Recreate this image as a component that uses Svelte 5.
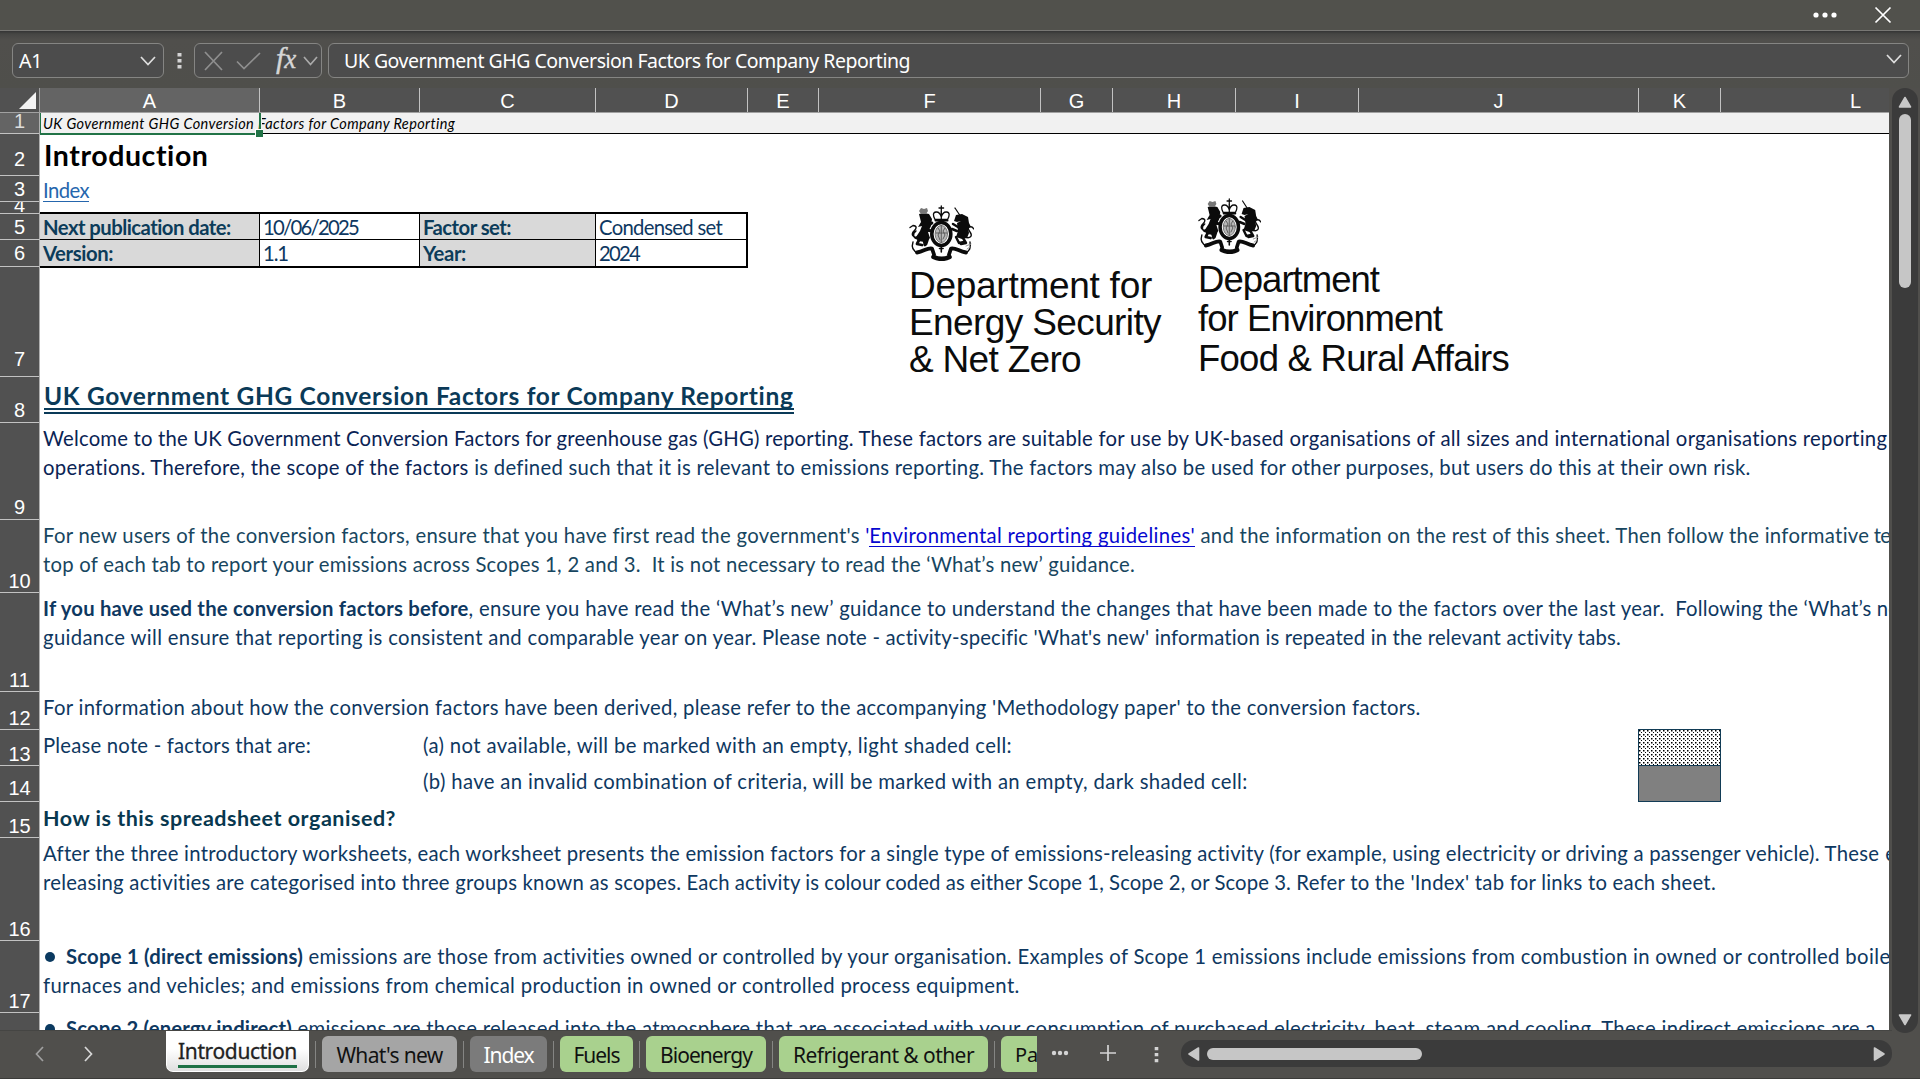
<script lang="ts">
  type Seg = { t: string; w?: number; c?: string };

  // Tracks a run of text so that it fills the given width.
  function fit(node: HTMLElement, width?: number) {
    if (!width) return;
    const n = [...(node.textContent ?? '')].length;
    const natural = node.getBoundingClientRect().width;
    node.style.letterSpacing = `${(width - natural) / n}px`;
  }

  const cols = [
    ['A', 220], ['B', 160], ['C', 176], ['D', 152], ['E', 71], ['F', 222],
    ['G', 72], ['H', 123], ['I', 123], ['J', 280], ['K', 82], ['L', 270],
  ] as [string, number][];

  // row number, height, space under the label
  const heads = [
    [1, 21, 0], [2, 42, 4], [3, 26, 0], [4, 12, -3], [5, 26, 0], [6, 27, 1], [7, 110, 5],
    [8, 46, 0], [9, 97, 0], [10, 73, -1], [11, 99, -1], [12, 38, -1], [13, 36, -1],
    [14, 36, 1], [15, 36, -1], [16, 103, -1], [17, 72, -1], [18, 40, 0],
  ] as [number, number, number][];

  const r9: Seg[][] = [
    [{ t: 'Welcome to the UK Government Conversion Factors for greenhouse gas (GHG) reporting.', w: 811, c: 'deep' }, { t: ' These factors are suitable for use by UK-based organisations of all sizes and international organisations reporting', w: 1035, c: 'deep' }],
    [{ t: 'operations. Therefore, the scope of the factors', w: 426, c: 'deep' }, { t: ' is defined such that it is relevant to emissions reporting. The factors may also be used for other purposes, but users do this at their own risk.', w: 1282 }],
  ];
  const r10: Seg[][] = [
    [
      { t: "For new users of the conversion factors, ensure that you have first read the government's ", w: 822 },
      { t: "'", w: 4, c: 'blue' },
      { t: "Environmental reporting guidelines'", w: 326, c: 'blue link' },
      { t: ' and the information on the rest of this sheet. Then follow the informative', w: 675 },
      { t: ' text at the', w: 88 },
    ],
    [{ t: 'top of each tab to report your emissions across Scopes 1, 2 and 3.  It is not necessary to read the ‘What’s new’ guidance.', w: 1092 }],
  ];
  const r11: Seg[][] = [
    [
      { t: 'If you have used the conversion factors before', w: 425.5, c: 'bold' },
      { t: ', ensure you have read the ‘What’s new’ guidance', w: 453 },
      { t: ' to understand the changes that have been made to the factors over the last year.', w: 743 },
      { t: '  Following the ‘What’s', w: 207 },
      { t: ' new’', w: 48 },
    ],
    [
      { t: 'guidance will ensure that reporting is consistent and comparable year on year.', w: 714 },
      { t: " Please note - activity-specific 'What's new' information is repeated in the relevant activity tabs.", w: 865 },
    ],
  ];
  const r12: Seg[][] = [
    [{ t: 'For information about how the conversion factors have been derived,', w: 635 }, { t: " please refer to the accompanying 'Methodology paper' to the conversion factors.", w: 743 }],
  ];
  const r16: Seg[][] = [
    [
      { t: 'After the three introductory worksheets, each worksheet presents the emission factors for a single type of emissions-releasing activity (for example, using electricity or driving a passenger vehicle). These', w: 1836 },
      { t: ' emissions-', w: 110 },
    ],
    [
      { t: 'releasing activities are categorised into three groups known as scopes.', w: 639 },
      { t: ' Each activity is colour coded as either Scope 1, Scope 2, or Scope 3.', w: 610 },
      { t: " Refer to the 'Index' tab for links to each sheet.", w: 425 },
    ],
  ];
  const r17: Seg[][] = [
    [
      { t: 'Scope 1 (direct emissions)', w: 237, c: 'bold' },
      { t: ' emissions are those from activities owned or controlled by your organisation.', w: 710 },
      { t: ' Examples of Scope 1 emissions include emissions from combustion in owned or controlled', w: 828 },
      { t: ' boilers,', w: 73 },
    ],
    [{ t: 'furnaces and vehicles; and emissions from chemical production in owned or controlled process equipment.', w: 977 }],
  ];
  const r18: Seg[][] = [
    [
      { t: 'Scope 2 (energy indirect)', w: 226, c: 'bold' },
      { t: ' emissions are those released into the atmosphere that are associated with your consumption of purchased electricity, heat, steam and cooling. These indirect emissions are a', w: 1584 },
    ],
  ];

  const tabs = [
    { t: "What's new", w: 135, tw: 106, k: 'grey' },
    { t: 'Index', w: 77, tw: 50, k: 'dark' },
    { t: 'Fuels', w: 73, tw: 46, k: 'green' },
    { t: 'Bioenergy', w: 120, tw: 92, k: 'green' },
    { t: 'Refrigerant & other', w: 209, tw: 181, k: 'green' },
  ];
</script>

{#snippet lines(ls: Seg[][], bullet = false)}
  {#each ls as l, i}
    <p class="line">
      {#if bullet && i === 0}<i class="bullet"></i>{/if}{#each l as s}<span class="seg {s.c ?? ''}" use:fit={s.w}>{s.t}</span>{/each}
    </p>
  {/each}
{/snippet}

{#snippet crest()}
  <svg class="crest" viewBox="5 5 66 56" preserveAspectRatio="none">
    <g fill="none" stroke="#0b0b0b" stroke-linecap="round" stroke-linejoin="round">
      <path d="M38.300 6v6M36 8h4.600" stroke-width="1.300" />
      <path d="M32 19.500c-2-4-2.500-7 1-7.500 3-.3 4.500 2 5.300 5 .8-3 2.300-5.300 5.300-5 3.500.5 3 3.500 1 7.500zM38.300 12v7" stroke-width="1.300" />
      <path d="M32.500 20.500h12" stroke-width="2" />
      <ellipse cx="38.300" cy="34" rx="9.500" ry="11.500" stroke-width="3.600" />
      <ellipse cx="38.300" cy="34" rx="6.200" ry="8.500" fill="#b8b8b8" stroke="#777" stroke-width="1" />
      <path d="M38.300 25.500v17M33 33h11M35 28l2 3-2 4 2 5M42 28l-2 3 2 4-2 4" stroke="#555" stroke-width=".9" />
      <path d="M15 37c-6 1-7-3-4-6s3-5-1-5.500M10 25.500l-3 2M13 31c-4 3-3 7 2 8" stroke-width="1.400" />
      <path d="M62 37c5 2 8-1 5-5s-2-6 2-5M69 27l2 2" stroke-width="1.400" />
      <path d="M52 8l6 9" stroke-width="1.200" />
      <path d="M17 38l-3 6 5 1M25 38l-2 6M24 26l5-3M23 30l6 1M20 36l2 9" stroke-width="2.800" />
      <path d="M60 38l3 5-5 1M53 37l3 6 5-1M55 27l-5-3M54 31l-5-2" stroke-width="2.500" />
      <path d="M10 42c-2 6 0 9 5 11 3-1 6-4 9-4M67 42c1 6 0 9-5 11-3-1-6-4-9-4" stroke-width="1.400" />
      <path d="M14 52.500c7-1 10-5 15-4l2 6M63 52.500c-7-1-10-5-15-4l-2 6" stroke-width="3.800" />
      <path d="M30.500 57c5 2.200 11.500 2.200 16 0" stroke-width="4.600" />
      <path d="M38.300 46v6M36.500 48.500h3.600" stroke-width="1.600" />
      <path d="M63 46l5-2M64 49l3-2" stroke="#999" stroke-width="1" />
    </g>
    <g fill="#0b0b0b">
      <path d="M16 14l5-1 5 1 3 5-1 7-3 6 2 6-5 4-7-1-2-4 4-6 2-5-4 1 3-5z" />
      <path d="M53 15l6-1 6 3 1 6 2 4-3 1 1 5-2 5-5 1-6-2 2-6-1-8 4-2-4 1-3-1z" />
      <path d="M16 11l2-3 3 1 3-1 1 3-2 3h-5z" fill="#777" />
    </g>
  </svg>
{/snippet}

<div class="app">
  <header class="title">
    <svg width="28" height="8" viewBox="0 0 28 8"><circle cx="5" cy="4" r="2.600" /><circle cx="14" cy="4" r="2.600" /><circle cx="23" cy="4" r="2.600" /></svg>
    <svg class="close" width="18" height="18" viewBox="0 0 18 18"><path d="M1.500 1.500l15 15M16.500 1.500l-15 15" /></svg>
  </header>

  <div class="formula">
    <div class="box name">
      <span use:fit={23}>A1</span>
      <svg width="16" height="10" viewBox="0 0 16 10"><path d="M1 1l7 7.500L15 1" /></svg>
    </div>
    <svg class="grip" width="5" height="18" viewBox="0 0 5 18"><path d="M.5 1h4v3.500h-4zM.5 7h4v3.500h-4zM.5 13h4v3.500h-4z" /></svg>
    <div class="box fx">
      <svg class="dim" width="19" height="20" viewBox="0 0 19 20"><path d="M1 1l17 18M18 1L1 19" /></svg>
      <svg class="dim tick" width="25" height="18" viewBox="0 0 25 18"><path d="M1 9.500l7 7L24 1" /></svg>
      <span class="fn">f<small>x</small></span>
      <svg class="soft" width="15" height="10" viewBox="0 0 15 10"><path d="M1 1l6.500 7.500L14 1" /></svg>
    </div>
    <div class="box bar">
      <span use:fit={566}>UK Government GHG Conversion Factors for Company Reporting</span>
      <svg width="16" height="10" viewBox="0 0 16 10"><path d="M1 1l7 7.500L15 1" /></svg>
    </div>
  </div>

  <div class="work">
    <div class="pane">
      <div class="colheads">
        <div class="corner"><svg width="17" height="17" viewBox="0 0 17 17"><path d="M17 0v17H0z" /></svg></div>
        {#each cols as [c, w]}
          <div class="ch" class:sel={c === 'A'} style:width="{w}px">{c}</div>
        {/each}
      </div>
      <div class="body">
        <div class="rowheads">
          {#each heads as [n, h, p]}
            <div class="rh" class:sel={n === 1} class:tiny={n === 4} style:height="{h}px"><span style:margin-bottom="{p}px">{n}</span></div>
          {/each}
        </div>
        <div class="sheet">
          <div class="r r1"><span use:fit={412}>UK Government GHG Conversion Factors for Company Reporting</span><i class="cursor"></i></div>
          <div class="r r2"><span class="seg" use:fit={165}>Introduction</span></div>
          <div class="r r3"><span class="seg" use:fit={46}>Index</span></div>
          <div class="info">
            <div class="k"><span use:fit={188}>Next publication date:</span></div>
            <div><span use:fit={95}>10/06/2025</span></div>
            <div class="k"><span use:fit={88}>Factor set:</span></div>
            <div><span use:fit={123}>Condensed set</span></div>
            <div class="k"><span use:fit={70}>Version:</span></div>
            <div><span use:fit={25}>1.1</span></div>
            <div class="k"><span use:fit={43}>Year:</span></div>
            <div><span use:fit={40}>2024</span></div>
          </div>
          <div class="r r7"></div>
          <div class="r r8"><span class="seg" use:fit={750}>UK Government GHG Conversion Factors for Company Reporting</span></div>
          <div class="r text r9">{@render lines(r9)}</div>
          <div class="r text r10">{@render lines(r10)}</div>
          <div class="r text r11">{@render lines(r11)}</div>
          <div class="r text r12">{@render lines(r12)}</div>
          <div class="notes">
            <div><span class="seg" use:fit={268}>Please note - factors that are:</span></div>
            <div><span class="seg" use:fit={589}>(a) not available, will be marked with an empty, light shaded cell:</span></div>
            <svg class="shade" width="83" height="37">
              <defs><pattern id="dots" width="4" height="4" patternUnits="userSpaceOnUse"><path d="M1 1h1.500v1.500H1zM3 3h1v1H3z" fill="#000" /></pattern></defs>
              <rect width="83" height="37" fill="#fff" /><rect width="83" height="37" fill="url(#dots)" />
              <rect x=".5" y=".5" width="82" height="36" fill="none" stroke="#123c56" />
            </svg>
            <div></div>
            <div><span class="seg" use:fit={825}>(b) have an invalid combination of criteria, will be marked with an empty, dark shaded cell:</span></div>
            <div class="shade solid"></div>
          </div>
          <div class="r r15"><span class="seg" use:fit={353}>How is this spreadsheet organised?</span></div>
          <div class="r text r16">{@render lines(r16)}</div>
          <div class="r text r17">{@render lines(r17, true)}</div>
          <div class="r text r18">{@render lines(r18, true)}</div>

          <div class="logo desnz">
            {@render crest()}
            <p><span use:fit={243}>Department for</span></p>
            <p><span use:fit={252}>Energy Security</span></p>
            <p><span use:fit={172}>&amp; Net Zero</span></p>
          </div>
          <div class="logo defra">
            {@render crest()}
            <p><span use:fit={181}>Department</span></p>
            <p><span use:fit={244}>for Environment</span></p>
            <p><span use:fit={311}>Food &amp; Rural Affairs</span></p>
          </div>
        </div>
      </div>
    </div>
    <div class="vscroll">
      <svg width="14" height="12" viewBox="0 0 14 12"><path d="M7 1.500L12.500 11h-11z" /></svg>
      <div class="thumb"></div>
      <svg class="down" width="14" height="12" viewBox="0 0 14 12"><path d="M7 10.500L12.500 1h-11z" /></svg>
    </div>
  </div>

  <footer class="tabs">
    <div class="nav">
      <svg class="prev" width="9" height="16" viewBox="0 0 9 16"><path d="M8 1L1.500 8 8 15" /></svg>
      <svg width="9" height="16" viewBox="0 0 9 16"><path d="M1 1l6.500 7L1 15" /></svg>
    </div>
    <div class="active"><span use:fit={119}>Introduction</span></div>
    {#each tabs as t}
      <i class="sep"></i>
      <div class="tab {t.k}" style:width="{t.w}px"><span use:fit={t.tw}>{t.t}</span></div>
    {/each}
    <i class="sep"></i>
    <div class="tab green cut"><span>Pa</span></div>
    <svg class="more" width="18" height="6" viewBox="0 0 18 6"><circle cx="3" cy="3" r="2.200" /><circle cx="9" cy="3" r="2.200" /><circle cx="15" cy="3" r="2.200" /></svg>
    <svg class="plus" width="18" height="18" viewBox="0 0 18 18"><path d="M9 1v16M1 9h16" /></svg>
    <svg class="vdots" width="5" height="18" viewBox="0 0 5 18"><path d="M.7 1h3.600v3.300H.7zM.7 7h3.600v3.300H.7zM.7 13h3.600v3.300H.7z" /></svg>
    <div class="hscroll">
      <svg width="12" height="14" viewBox="0 0 12 14"><path d="M1 7l9.500-6v12z" /></svg>
      <div class="hthumb"></div>
      <svg class="right" width="12" height="14" viewBox="0 0 12 14"><path d="M11 7L1.500 1v12z" /></svg>
    </div>
  </footer>
</div>

<style>
  :global(body) { margin: 0; background: #fff; overflow: hidden; }
  .app { width: 1920px; height: 1079px; display: flex; flex-direction: column; background: #504f4c; font-family: 'Noto Sans', sans-serif; color: #fff; overflow: hidden; box-sizing: border-box; border-bottom: 1px solid #3b3b39; }
  .app * { box-sizing: border-box; }
  p { margin: 0; }
  svg { display: block; flex: none; }
  span { white-space: pre; display: inline-block; }

  .title { height: 31px; flex: none; display: flex; justify-content: flex-end; align-items: flex-start; padding: 6px 28px 0 0; border-bottom: 1px solid #787774; background: #51514c; fill: #fff; }
  .title svg:first-child { margin: 5px 35px 0 0; }
  .close { stroke: #fff; stroke-width: 1.700; }

  .formula { height: 57px; flex: none; display: flex; padding: 12px 11px 10px 12px; background: linear-gradient(#343434 0, #464644 3px, #504f4c 9px, #4f4f4b 100%); font-size: 19.500px; }
  .formula svg { fill: none; stroke: #dedede; stroke-width: 1.700; }
  .box { height: 35px; border: 1px solid #858583; border-radius: 6px; background: #4c4c4c; display: flex; align-items: center; }
  .name { width: 152px; padding: 0 7px 0 6px; justify-content: space-between; }
  .formula .grip { margin: 9px 12px 0 13px; fill: #d4d4d4; stroke: none; }
  .fx { width: 128px; padding: 0 3px 0 9px; }
  .formula .dim { stroke: #8f8f8f; }
  .tick { margin-left: 13px; }
  .fn { font: italic 30px/30px 'Liberation Serif', serif; color: #d6d6d6; margin: -4px 0 0 15px; width: 28px; -webkit-text-stroke: .4px #d6d6d6; }
  .fn small { font-size: 27px; letter-spacing: -1px; }
  .formula .soft { stroke: #aaa; }
  .bar { width: 1581px; margin-left: 6px; padding: 0 6px 0 15px; justify-content: space-between; }
  .bar svg { margin-bottom: 4px; }

  .work { height: 942px; flex: none; display: flex; }
  .pane { width: 1889px; height: 942px; overflow: hidden; }
  .colheads { height: 25px; display: flex; width: 2100px; border-bottom: 1px solid #a1a1a1; font: 20px/27px 'Liberation Sans', sans-serif; background: #515151; }
  .corner { width: 40px; flex: none; border-right: 1px solid #a1a1a1; fill: #f3f3f3; padding: 4px 0 0 19px; }
  .ch { flex: none; text-align: center; border-right: 1px solid #c2c2c2; }
  .ch.sel { background: #646464; }
  .body { display: flex; }
  .rowheads { width: 40px; flex: none; background: #515151; border-right: 1px solid #b0b0b0; }
  .rh { border-bottom: 1px solid #c2c2c2; display: flex; align-items: flex-end; justify-content: center; font: 20px/24px 'Liberation Sans', sans-serif; overflow: hidden; }
  .rh.sel { background: #646464; color: #ddd; }
  .rh.tiny span { line-height: 21px; }

  .sheet { width: 1849px; height: 917px; flex: none; background: #fff; overflow: hidden; position: relative; font: 20.300px/29px Lato, sans-serif; color: #0e3861; }
  .r { padding-left: 3px; }
  .text { padding-top: 1px; }
  .line { height: 29px; white-space: nowrap; display: flex; align-items: center; }
  .bold { font-weight: 700; }
  .deep { color: #0a2455; }
  .blue { color: #0707cf; }
  .link { border-bottom: 1px solid #0707cf; height: 26px; margin-top: -3px; line-height: 29px; }
  .bullet { width: 10px; height: 10px; border-radius: 50%; background: #0b3a60; margin: 0 11px 0 2px; flex: none; }
  .r1 { height: 21px; background: #f1f1f1; border-bottom: 1px solid #000; color: #000; font: italic 14.500px/22px Lato, sans-serif; position: relative; }
  .cursor { position: absolute; left: -1px; top: -2px; width: 222px; height: 24px; border: 2px solid #217346; box-shadow: 1px 0 #f1f1f1; }
  .cursor::after { content: ''; position: absolute; right: -4px; bottom: -4px; width: 7px; height: 7px; background: #217346; border: 1px solid #fff; border-width: 1px 0 0 1px; }
  .r2 { height: 42px; padding-left: 4px; font-weight: 700; font-size: 28.500px; line-height: 42px; color: #000; }
  .r3 { height: 36px; color: #2566ad; }
  .r3 span { height: 24px; line-height: 25px; border-bottom: 1px solid #2566ad; }
  .info { width: 708px; height: 56px; display: grid; grid-template-columns: 220px 160px 176px 152px; grid-template-rows: 26px 26px; border: solid #000; border-width: 2px 2px 2px 0; line-height: 27px; }
  .info div { padding-left: 3px; border-right: 1px solid #000; border-bottom: 1px solid #000; overflow: hidden; }
  .info div:nth-child(4n) { border-right: 0; }
  .info div:nth-child(n + 5) { border-bottom: 0; }
  .info .k { background: #d9d9d9; font-weight: 700; color: #0c3c5a; }
  .r7 { height: 109px; }
  .r8 { height: 46px; padding-left: 4px; font-weight: 700; font-size: 24.500px; color: #0a3a58; line-height: 37px; }
  .r8 span { height: 37px; border-bottom: 6px double #0a3a58; }
  .r9 { height: 97px; }
  .r10 { height: 73px; color: #174660; }
  .r11 { height: 99px; }
  .r12 { height: 38px; }
  .notes { display: grid; grid-template-columns: 380px 1218px 83px; grid-template-rows: 36px 36px; }
  .notes div:not(.shade) { padding: 1px 0 0 3px; }
  .shade { width: 83px; height: 37px; margin-top: -1px; }
  .solid { background: #808080; border: 1px solid #123c56; }
  .r15 { height: 36px; font-weight: 700; font-size: 21.500px; line-height: 32px; color: #08384f; }
  .r16 { height: 103px; }
  .r17 { height: 72px; }

  .logo { position: absolute; font: 37px/37px 'Liberation Sans', sans-serif; color: #0b0c0c; }
  .crest { width: 66px; height: 56px; margin-left: -1px; }
  .desnz { left: 869px; top: 92px; }
  .desnz .crest { margin-bottom: 6px; }
  .defra { left: 1158px; top: 85px; font-size: 36.500px; line-height: 39.400px; }
  .defra .crest { margin-bottom: 6px; width: 64px; }

  .vscroll { width: 26px; height: 945px; margin-left: 3px; background: #3b3b3b; border-radius: 13px; display: flex; flex-direction: column; align-items: center; padding: 8px 0 7px; fill: #c8c8c8; }
  .vscroll svg { stroke: #c8c8c8; stroke-width: 1.600; stroke-linejoin: round; }
  .thumb { width: 12px; height: 174px; margin-top: 6px; border-radius: 6px; background: #c6c6c6; }
  .down { margin-top: auto; }

  .tabs { height: 48px; flex: none; display: flex; align-items: flex-start; font-size: 21px; border-top: 1px solid #454543; width: 1892px; }
  .nav { width: 166px; display: flex; padding: 15px 0 0 35px; gap: 40px; }
  .nav svg { fill: none; stroke: #d8d8d8; stroke-width: 1.700; }
  .nav .prev { stroke: #a0a0a0; }
  .active { width: 143px; height: 41px; background: linear-gradient(#fff 45%, #dfdfdf); border: 1px solid #fff; border-top: 0; border-radius: 0 0 7px 7px; color: #222; padding-left: 11px; line-height: 40px; flex: none; -webkit-text-stroke: .3px #222; }
  .active span { height: 37px; border-bottom: 3px solid #1e7145; }
  .sep { width: 1px; height: 27px; margin: 10px 6px 0; background: #858583; flex: none; }
  .tab { height: 36px; margin-top: 5px; border-radius: 6px; text-align: center; line-height: 38px; color: #111; flex: none; overflow: hidden; }
  .grey { background: #a5a5a5; }
  .dark { background: #7b7b7b; color: #fff; }
  .green { background: #a9d18e; }
  .cut { width: 36px; border-radius: 6px 0 0 6px; text-align: left; padding-left: 14px; font-size: 20px; }
  .tabs > svg { fill: #d4d4d4; }
  .more { margin: 19px 0 0 14px; }
  .tabs > .plus { margin: 13px 0 0 30px; fill: none; stroke: #d4d4d4; stroke-width: 1.700; }
  .vdots { margin: 15px 0 0 37px; }
  .hscroll { margin: 9px 0 0 auto; width: 711px; height: 27px; border-radius: 13px; background: #3b3b3b; display: flex; align-items: center; padding: 0 7px; fill: #c8c8c8; flex: none; }
  .hscroll svg { stroke: #c8c8c8; stroke-width: 1.600; stroke-linejoin: round; }
  .hthumb { width: 215px; height: 12px; border-radius: 6px; background: #c6c6c6; margin-left: 7px; }
  .right { margin-left: auto; }
</style>
